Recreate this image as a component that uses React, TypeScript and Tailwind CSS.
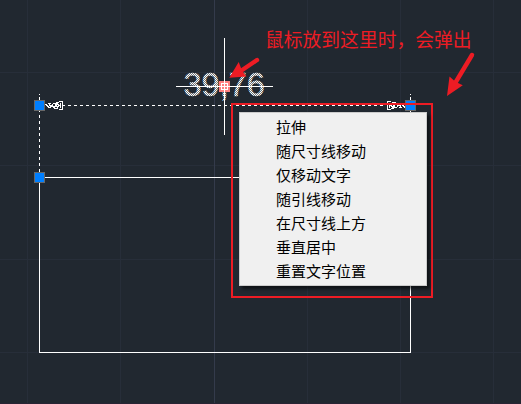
const menuItems = [
  "拉伸",
  "随尺寸线移动",
  "仅移动文字",
  "随引线移动",
  "在尺寸线上方",
  "垂直居中",
  "重置文字位置",
];

const minorX = [27, 120, 307, 400, 493];
const minorY = [72, 165, 259, 352];

function Grip({ x, y }: { x: number; y: number }) {
  return (
    <g>
      <rect x={x} y={y} width="11" height="11" fill="#686868" />
      <rect x={x + 1} y={y + 1} width="9" height="9" fill="#007fff" />
    </g>
  );
}

function Arrowhead() {
  return (
    <g>
      <path
        d="M0 3h1v1h1v1h1v1h1M3 2.5h3M4 3.5l2 2 2-2M3 6.5h3M8 2.5h3M7 4.5l2 2 2-2 1 1M9 7.5h4M11 1.5h3M10 4.5l2-2 2 2-2 2"
        fill="none"
        stroke="#fff"
        strokeWidth="1"
      />
      <path d="M14 .5h3.500v8H14M15.500 2v5" fill="none" stroke="#fff" />
    </g>
  );
}

function Drawing() {
  return (
    <svg
      className="absolute inset-0"
      width="521"
      height="404"
      viewBox="0 0 521 404"
      shapeRendering="crispEdges"
    >
      <defs>
        <pattern id="dither" width="2" height="2" patternUnits="userSpaceOnUse">
          <rect width="2" height="2" fill="#74787c" />
          <rect width="1" height="1" fill="#fff" />
          <rect x="1" y="1" width="1" height="1" fill="#fff" />
        </pattern>
      </defs>
      {minorX.map((x) => (
        <rect key={x} x={x} width="1" height="404" fill="#272e39" />
      ))}
      {minorY.map((y) => (
        <rect key={y} y={y} width="521" height="1" fill="#272e39" />
      ))}
      <rect x="214" width="1" height="404" fill="#343b4b" />
      <rect y="403" width="521" height="1" fill="#282434" />

      <path d="M39.500 183V352.500H410.500V177.500H45" fill="none" stroke="#fff" />
      <path
        d="M39.500 97V172M410.500 97V172M68 105.500H386"
        fill="none"
        stroke="#fff"
        strokeDasharray="3 3"
      />
      <path d="M39.500 94v1M410.500 94v1M39.500 97v3M410.500 97v3M63 105.500h2" stroke="#fff" />
      <g transform="translate(45 101)">
        <Arrowhead />
      </g>
      <g transform="translate(405 110) rotate(180)">
        <Arrowhead />
      </g>

      <text
        x="183.500"
        y="96"
        fontSize="32.500"
        className="font-['Liberation_Sans',sans-serif]"
        fill="url(#dither)"
        stroke="url(#dither)"
        strokeWidth="0.350"
      >
        39,76
      </text>
      <Grip x={34} y={100} />
      <Grip x={34} y={172} />
      <Grip x={405} y={100} />

      <rect x="219" y="81" width="11" height="11" fill="#ff8080" />
      <rect x="221.500" y="83.500" width="6" height="6" fill="none" stroke="#fff" />
      <path d="M176 86.500H273M224.500 38V135" stroke="#fff" />
    </svg>
  );
}

function Callouts() {
  return (
    <svg className="absolute inset-0" width="521" height="404" viewBox="0 0 521 404">
      <g fill="#ed1c24" stroke="#ed1c24">
        <path d="M257 60L240 71.500" strokeWidth="4.400" strokeLinecap="round" />
        <path d="M229.300 77.800L238.700 62 241 68 243.500 72.800 246.500 76.400z" stroke="none" />
        <path d="M472 55L455.500 82.500" strokeWidth="4.400" strokeLinecap="round" />
        <path d="M447 96L449.500 76.500 454 80.500 458.500 83.300 462.800 85.200z" stroke="none" />
      </g>
    </svg>
  );
}

function ContextMenu() {
  return (
    <ul className="flex h-[174px] w-[188px] flex-col border border-[#ccc] bg-[#f0f0f0] py-0.5 font-['Noto_Sans_CJK_SC',sans-serif] text-[15px] text-black shadow-[3px_3px_3px_rgba(0,0,0,0.55)]">
      {menuItems.map((label) => (
        <li key={label} className="flex h-6 items-center whitespace-nowrap pl-9 leading-6">
          {label}
        </li>
      ))}
    </ul>
  );
}

export default function App() {
  return (
    <main className="relative h-[404px] w-[521px] overflow-hidden bg-[#212830]">
      <Drawing />
      <div className="absolute left-[231px] top-[103px] flex h-[195px] w-[202px] items-start border-2 border-[#ed1c24] pl-1.5 pt-[7px]">
        <ContextMenu />
      </div>
      <p className="absolute left-[265px] top-[25px] whitespace-nowrap font-['Noto_Sans_CJK_SC',sans-serif] text-[18.800px] leading-7 text-[#ed1c24]">
        鼠标放到这里时，会弹出
      </p>
      <Callouts />
    </main>
  );
}
